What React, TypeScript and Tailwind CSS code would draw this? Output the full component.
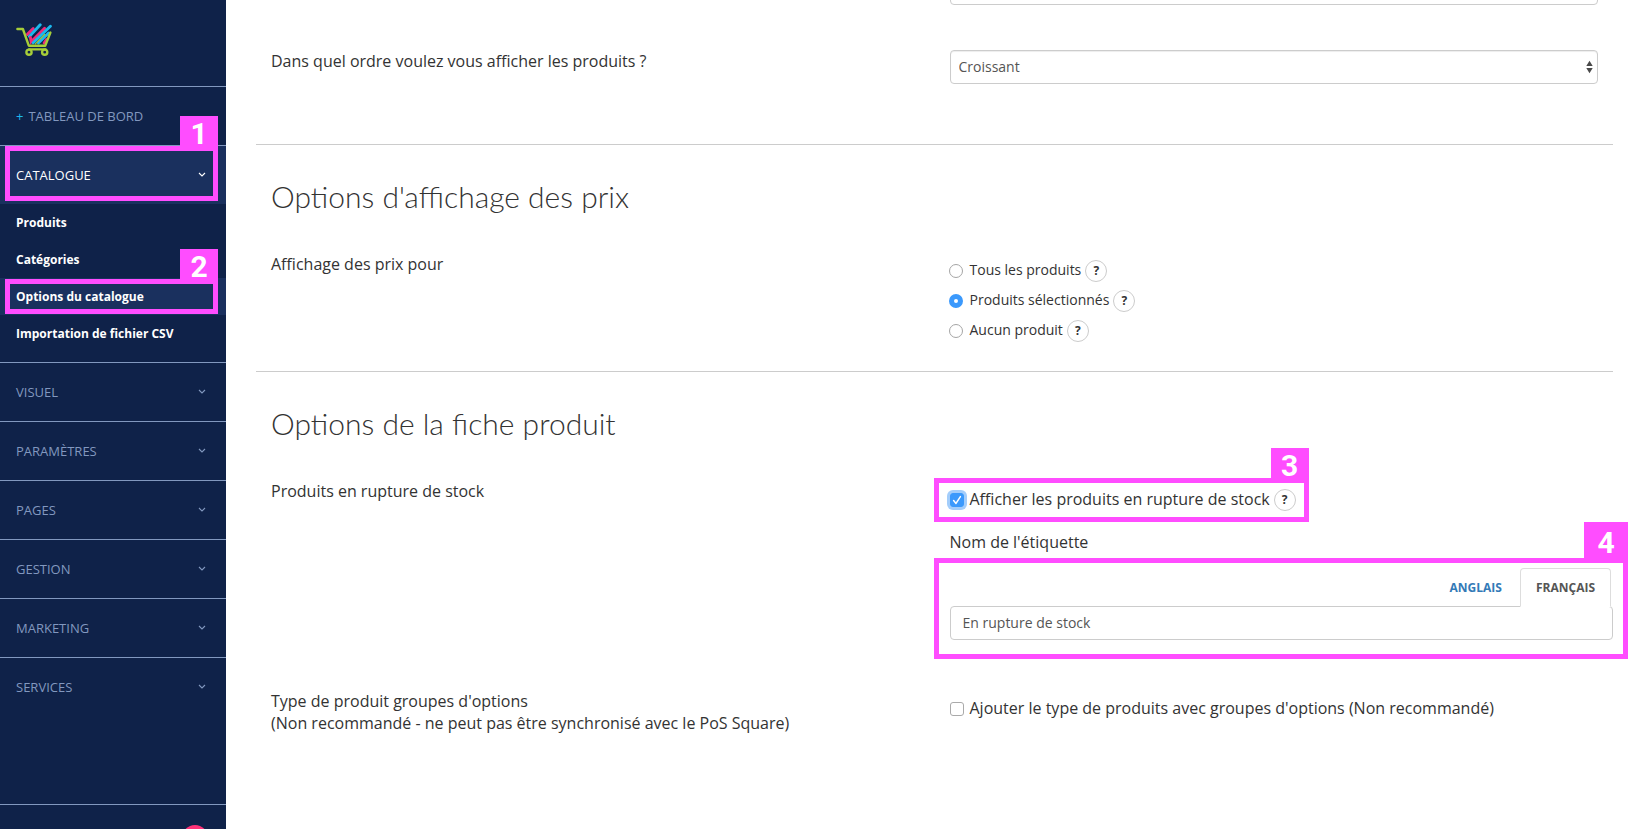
import { useState, type ReactNode } from 'react';
import clsx from 'clsx';

const subLinks = ['Produits', 'Catégories', 'Options du catalogue', 'Importation de fichier CSV'];
const sections = ['Visuel', 'Paramètres', 'Pages', 'Gestion', 'Marketing', 'Services'];
const priceChoices = ['Tous les produits', 'Produits sélectionnés', 'Aucun produit'];
const languages = ['Anglais', 'Français'];

function Logo() {
	return (
		<svg width="36" height="34" viewBox="0 0 36 34" fill="none" strokeLinecap="round" aria-hidden="true">
			<g strokeWidth="2.9">
				<path d="M11.4 11.4 17.2 5.6" stroke="#ee2a7b" />
				<path d="M13.4 13.4 24.2 1.8" stroke="#1cb8ee" />
				<path d="M14.4 14.4 15.2 18.8 28.6 5.2" stroke="#ee2a7b" />
				<path d="M17.2 19.8 34.4 3.2" stroke="#1cb8ee" />
				<path d="M22.4 20 32.6 10" stroke="#1cb8ee" />
				<path d="M28.2 20 30.4 16.6" stroke="#ee2a7b" />
			</g>
			<path d="M19.4 20.8 28.8 11.4" stroke="#a6ce39" strokeWidth="1.2" />
			<g stroke="#a6ce39" strokeWidth="2.4" strokeLinejoin="round">
				<path d="M1.4 6H6.9L12.8 22.7H29.2L34.4 9.6" />
				<path d="M13 26.4H29.6" />
				<circle cx="13" cy="29.2" r="2.6" />
				<circle cx="28.7" cy="29.2" r="2.6" />
			</g>
		</svg>
	);
}

function Chevron() {
	return (
		<svg width="8" height="6" viewBox="0 0 8 6" fill="none" stroke="currentColor" strokeWidth="1.1" aria-hidden="true">
			<path d="M1 1 4 4 7 1" />
		</svg>
	);
}

// Numbered frame laid over the element that a step refers to
function Marker({ step, className, large }: { step: number; className: string; large?: boolean }) {
	return (
		<div className={clsx('pointer-events-none absolute z-10 border-[5px] border-[#ff4dff]', className)}>
			<span
				className={clsx(
					'absolute -right-[5px] bottom-full flex items-center justify-center bg-[#ff4dff] font-[Roboto,sans-serif] text-[30px] leading-none font-bold text-white',
					large ? 'h-[41px] w-11' : 'h-[35px] w-[38px]'
				)}
			>
				{step}
			</span>
		</div>
	);
}

function Help() {
	return (
		<button
			type="button"
			aria-label="Aide"
			className="flex size-[22px] items-center justify-center rounded-full border border-[#ccc] bg-white text-xs font-bold text-[#333]"
		>
			?
		</button>
	);
}

function Check({ id, checked, onChange }: { id: string; checked: boolean; onChange: (v: boolean) => void }) {
	return (
		<span className="relative flex size-[14px] shrink-0">
			<input
				id={id}
				type="checkbox"
				checked={checked}
				onChange={(e) => onChange(e.target.checked)}
				className="size-[14px] appearance-none rounded-[3px] border border-[#aaa] bg-white checked:border-[#3b99fc] checked:bg-[#3b99fc] checked:ring-[3px] checked:ring-[#a3cdfb]"
			/>
			{checked && (
				<svg className="pointer-events-none absolute inset-0" width="14" height="14" viewBox="0 0 14 14" fill="none" stroke="#fff" strokeWidth="1.5" strokeLinecap="round" strokeLinejoin="round" aria-hidden="true">
					<path d="M3.6 7.6 6 10.4 10.4 3.6" />
				</svg>
			)}
		</span>
	);
}

function Sidebar() {
	return (
		<aside className="flex w-[226px] shrink-0 flex-col overflow-hidden bg-[#0f2249] text-[13px] text-[#8298bf]">
			<a href="#" className="h-[86px] shrink-0 px-4 pt-[23px]" aria-label="Accueil">
				<Logo />
			</a>
			<nav className="flex-1">
				<a href="#" className="flex h-[59px] items-center gap-[5px] border-t border-[#8298bf] px-4 uppercase">
					<span className="text-[#1cb8ee]">+</span> Tableau de bord
				</a>
				<div className="relative">
					<button
						type="button"
						aria-expanded="true"
						className="flex h-[59px] w-full items-center justify-between border-t border-[#8298bf] bg-[#1a305e] pr-5 pl-4 text-white uppercase"
					>
						Catalogue
						<Chevron />
					</button>
					<Marker step={1} className="top-px right-2 bottom-[3px] left-[5px]" />
				</div>
				<ul className="pb-[10px]">
					{subLinks.map((label) => {
						const current = label === 'Options du catalogue';
						return (
							<li key={label} className="relative">
								<a
									href="#"
									aria-current={current ? 'page' : undefined}
									className={clsx('flex h-[37px] items-center px-4 text-xs font-bold text-white', current && 'bg-[#1a305e]')}
								>
									{label}
								</a>
								{current && <Marker step={2} className="top-px right-2 bottom-px left-[5px]" />}
							</li>
						);
					})}
				</ul>
				{sections.map((label) => (
					<button
						key={label}
						type="button"
						className="flex h-[59px] w-full items-center justify-between border-t border-[#8298bf] pr-5 pl-4 uppercase"
					>
						{label}
						<Chevron />
					</button>
				))}
			</nav>
			<div className="flex h-[25px] shrink-0 justify-end border-t border-[#8298bf] pt-5 pr-[18px]">
				<span className="size-[26px] shrink-0 rounded-full bg-[#ff3378]" />
			</div>
		</aside>
	);
}

function Heading({ children }: { children: ReactNode }) {
	return (
		<h2 className="mt-[31px] mb-[37px] px-[15px] font-['Lato',sans-serif] text-[30px] leading-10 font-light">{children}</h2>
	);
}

function Row({ label, children, className }: { label: ReactNode; children: ReactNode; className?: string }) {
	return (
		<div className={clsx('grid grid-cols-2', className)}>
			<div className="px-[15px]">{label}</div>
			<div className="px-[15px]">{children}</div>
		</div>
	);
}

function Arrows() {
	return (
		<svg className="pointer-events-none absolute top-[10px] right-[5px]" width="7" height="14" viewBox="0 0 7 14" fill="#4a4a4a" aria-hidden="true">
			<path d="M3.5 .8 6.7 6H.3zM3.5 13.2.3 8h6.4z" />
		</svg>
	);
}

const selectClass =
	'h-[34px] w-full appearance-none rounded border border-[#ccc] bg-white px-2 text-sm text-[#555] shadow-[inset_0_1px_1px_rgba(0,0,0,0.075)]';

export default function App() {
	const [price, setPrice] = useState('Produits sélectionnés');
	const [showSoldOut, setShowSoldOut] = useState(true);
	const [optionGroups, setOptionGroups] = useState(false);
	const [lang, setLang] = useState('Français');
	const [tag, setTag] = useState('En rupture de stock');

	return (
		<div className="flex h-screen overflow-hidden bg-white font-['Open_Sans','Noto_Sans',sans-serif] text-base leading-[22px] text-[#333]">
			<Sidebar />
			<main className="min-w-0 flex-1 overflow-x-hidden overflow-y-auto pr-7 pl-[30px]">
				{/* The sort field is scrolled almost out of view */}
				<Row label={null} className="-mt-[29px]">
					<select className={selectClass} aria-label="Trier les produits" />
				</Row>
				<Row
					className="mt-[45px] pb-[60px]"
					label={<label htmlFor="order">Dans quel ordre voulez vous afficher les produits ?</label>}
				>
					<div className="relative">
						<select id="order" className={selectClass}>
							<option>Croissant</option>
							<option>Décroissant</option>
						</select>
						<Arrows />
					</div>
				</Row>

				<section className="flow-root border-t border-[#ccc]">
					<Heading>Options d'affichage des prix</Heading>
					<Row label={<span id="price-label">Affichage des prix pour</span>} className="pb-[29px]">
						<div role="radiogroup" aria-labelledby="price-label" className="-ml-px flex flex-col gap-2 pt-[7px] text-sm">
							{priceChoices.map((choice) => (
								<div key={choice} className="flex h-[22px] items-center gap-1">
									<label className="flex items-center gap-[7px]">
										<input
											type="radio"
											name="price"
											checked={price === choice}
											onChange={() => setPrice(choice)}
											className="size-[14px] appearance-none rounded-full border border-[#a5a5a5] bg-white checked:border-[5px] checked:border-[#3b99fc]"
										/>
										<span className="pb-[2px]">{choice}</span>
									</label>
									<Help />
								</div>
							))}
						</div>
					</Row>
				</section>

				<section className="flow-root border-t border-[#ccc]">
					<Heading>Options de la fiche produit</Heading>
					<Row label="Produits en rupture de stock">
						<div className="flex pt-[9px]">
							<div className="relative flex h-[22px] items-center gap-1">
								<Check id="sold-out" checked={showSoldOut} onChange={setShowSoldOut} />
								<label htmlFor="sold-out" className="ml-[2px] pb-[2px]">
									Afficher les produits en rupture de stock
								</label>
								<Help />
								<Marker step={3} className="-top-[11px] -right-[13px] -bottom-[11px] -left-4" />
							</div>
						</div>
						<label htmlFor="tag" className="mt-5 mb-[15px] block">
							Nom de l'étiquette
						</label>
						<div className="relative -mr-[15px]">
							<div role="tablist" className="relative flex justify-end gap-[2px] pr-[2px] text-xs">
								{languages.map((name) => (
									<button
										key={name}
										type="button"
										role="tab"
										aria-selected={lang === name}
										onClick={() => setLang(name)}
										className={clsx(
											'-mb-px h-[39px] rounded-t border px-[15px] font-bold uppercase',
											lang === name ? 'border-[#ddd] border-b-white bg-white text-[#555]' : 'border-transparent text-[#337ab7]'
										)}
									>
										{name}
									</button>
								))}
							</div>
							<input
								id="tag"
								type="text"
								value={tag}
								onChange={(e) => setTag(e.target.value)}
								className="block h-[34px] w-full rounded border border-[#ccc] bg-white px-3 pb-[2px] text-sm text-[#555]"
							/>
							<Marker step={4} large className="-top-[10px] -right-[15px] -bottom-[19px] -left-4" />
						</div>
					</Row>
					<Row
						className="mt-[50px]"
						label={
							<>
								Type de produit groupes d'options
								<br />
								(Non recommandé - ne peut pas être synchronisé avec le PoS Square)
							</>
						}
					>
						<div className="flex items-center gap-[6px] pt-[7px]">
							<Check id="option-groups" checked={optionGroups} onChange={setOptionGroups} />
							<label htmlFor="option-groups" className="pb-[2px]">
								Ajouter le type de produits avec groupes d'options (Non recommandé)
							</label>
						</div>
					</Row>
				</section>
			</main>
		</div>
	);
}
